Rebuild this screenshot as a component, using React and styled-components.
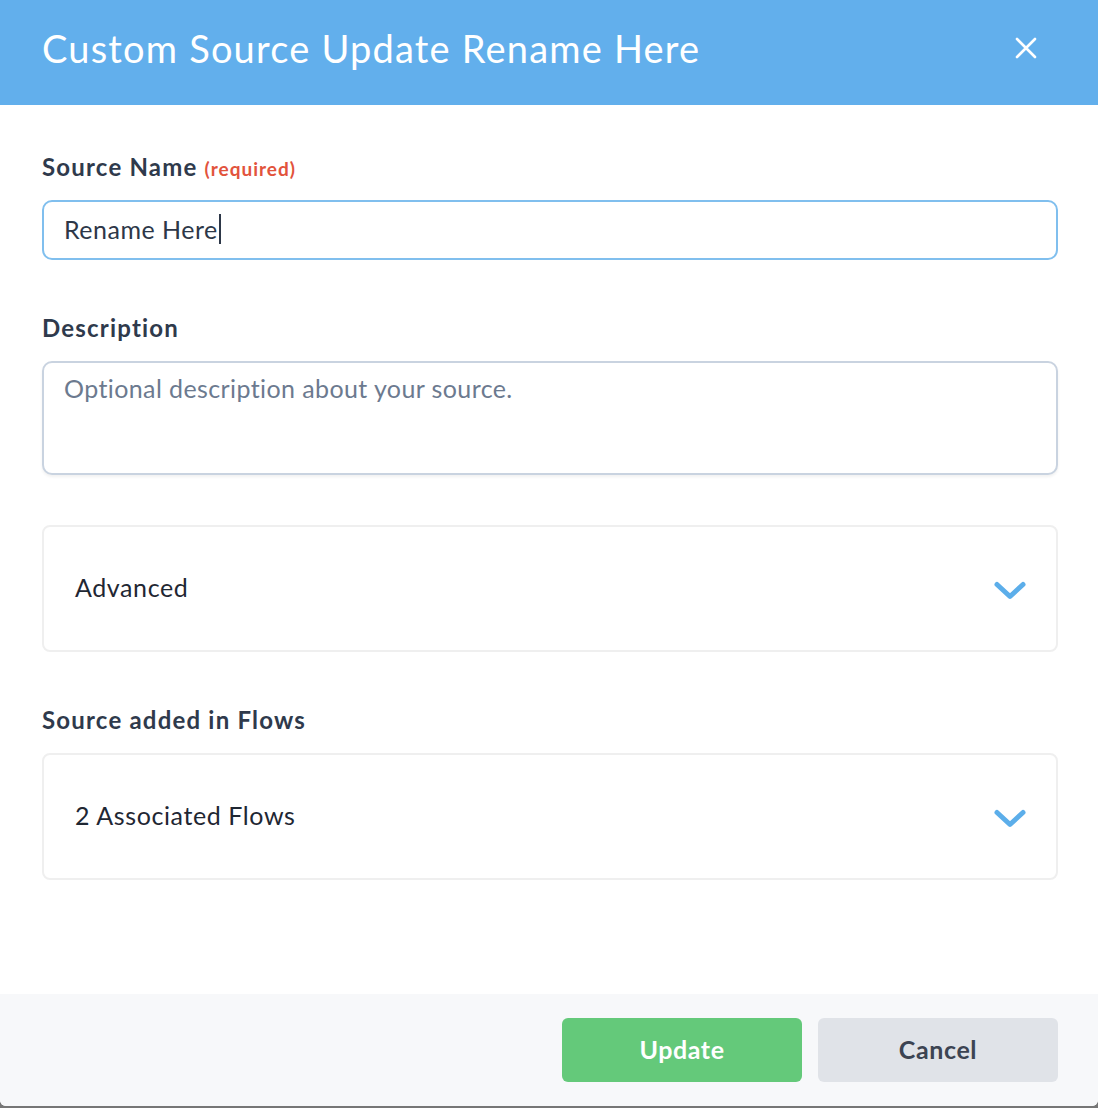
import React from 'react'
import styled, { createGlobalStyle } from 'styled-components'

const GlobalStyle = createGlobalStyle`
  * { box-sizing: border-box; }
  html, body {
    margin: 0;
    padding: 0;
    background: #767676;
    font-family: Lato, "Open Sans", sans-serif;
  }
`

function Chevron() {
  return (
    <ChevronIcon width="32" height="20" viewBox="0 0 32 20" fill="none">
      <path d="M3 3.5 L16 15.5 L29 3.5" stroke="#5caeea" strokeWidth="5" strokeLinecap="round" strokeLinejoin="round" />
    </ChevronIcon>
  )
}

function CloseIcon() {
  return (
    <svg width="22" height="22" viewBox="0 0 22 22" fill="none">
      <path d="M2 2 L20 20 M20 2 L2 20" stroke="#fff" strokeWidth="2.6" strokeLinecap="round" />
    </svg>
  )
}

function App() {
  return (
    <>
      <GlobalStyle />
      <Modal>
        <Header>
          <Title>Custom Source Update Rename Here</Title>
          <CloseButton aria-label="close">
            <CloseIcon />
          </CloseButton>
        </Header>

        <Body>
          <Label>
            Source Name <Required>(required)</Required>
          </Label>
          <NameField>
            Rename Here<Caret />
          </NameField>

          <Label $top={54}>Description</Label>
          <TextArea placeholder="Optional description about your source." />

          <Collapse $top={50}>
            <CollapseTitle>Advanced</CollapseTitle>
            <Chevron />
          </Collapse>

          <Label $top={54}>Source added in Flows</Label>
          <Collapse>
            <CollapseTitle>2 Associated Flows</CollapseTitle>
            <Chevron />
          </Collapse>
        </Body>

        <Footer>
          <Button $primary>Update</Button>
          <Button>Cancel</Button>
        </Footer>
      </Modal>
    </>
  )
}

export default App

const Modal = styled.div`
  height: 1106px;
  background: #fff;
  display: flex;
  flex-direction: column;
  border-radius: 0 0 6px 6px;
  overflow: hidden;
`
const Header = styled.div`
  height: 105px;
  flex-shrink: 0;
  background: #62afec;
  display: flex;
  align-items: center;
  justify-content: space-between;
  padding: 0 61px 9px 42px;
`
const Title = styled.h1`
  margin: 0;
  color: #fff;
  font-size: 38px;
  font-weight: 400;
  letter-spacing: 1.2px;
`
const CloseButton = styled.button`
  border: none;
  background: none;
  padding: 0;
  display: flex;
  cursor: pointer;
`
const Body = styled.div`
  flex: 1;
  padding: 48px 40px 0 42px;
  display: flex;
  flex-direction: column;
`
const Label = styled.label`
  display: flex;
  align-items: baseline;
  gap: 7px;
  height: 28px;
  line-height: 28px;
  font-size: 24px;
  font-weight: 700;
  letter-spacing: 1.2px;
  color: #2f3a4c;
  margin-top: ${p => p.$top || 0}px;
  margin-bottom: 19px;
`
const Required = styled.span`
  font-size: 19px;
  letter-spacing: 1px;
  color: #e2533c;
`
const NameField = styled.div`
  height: 60px;
  flex-shrink: 0;
  border: 2px solid #80bfee;
  border-radius: 10px;
  padding: 0 20px 2px;
  display: flex;
  align-items: center;
  font-size: 25px;
  letter-spacing: 0.5px;
  color: #2d3748;
`
const Caret = styled.span`
  width: 2px;
  height: 30px;
  margin-left: 1px;
  background: #2d3748;
`
const TextArea = styled.textarea`
  height: 114px;
  flex-shrink: 0;
  border: 2px solid #c9d3e0;
  border-radius: 10px;
  padding: 10px 20px;
  font-family: inherit;
  font-size: 25px;
  letter-spacing: 0.4px;
  line-height: 30px;
  resize: none;
  outline: none;
  box-shadow: 0 2px 3px rgba(0, 0, 0, 0.06);

  &::placeholder {
    color: #6c7a8f;
  }
`
const Collapse = styled.div`
  height: 127px;
  flex-shrink: 0;
  margin-top: ${p => p.$top || 0}px;
  border: 2px solid #efefef;
  border-radius: 8px;
  display: flex;
  align-items: center;
  justify-content: space-between;
  padding: 0 30px 3px 31px;
`
const CollapseTitle = styled.span`
  font-size: 25px;
  letter-spacing: 0.6px;
  color: #1f2733;
`
const ChevronIcon = styled.svg`
  margin-top: 7px;
`
const Footer = styled.div`
  height: 112px;
  flex-shrink: 0;
  background: #f7f8fa;
  display: flex;
  justify-content: flex-end;
  align-items: center;
  gap: 16px;
  padding: 0 40px 0 0;
`
const Button = styled.button`
  width: 240px;
  height: 64px;
  border: none;
  border-radius: 6px;
  padding-bottom: 3px;
  font-family: inherit;
  font-size: 25px;
  font-weight: 700;
  letter-spacing: 0.6px;
  cursor: pointer;
  background: ${p => (p.$primary ? '#64c97a' : '#e0e3e8')};
  color: ${p => (p.$primary ? '#fff' : '#3c4452')};
`
